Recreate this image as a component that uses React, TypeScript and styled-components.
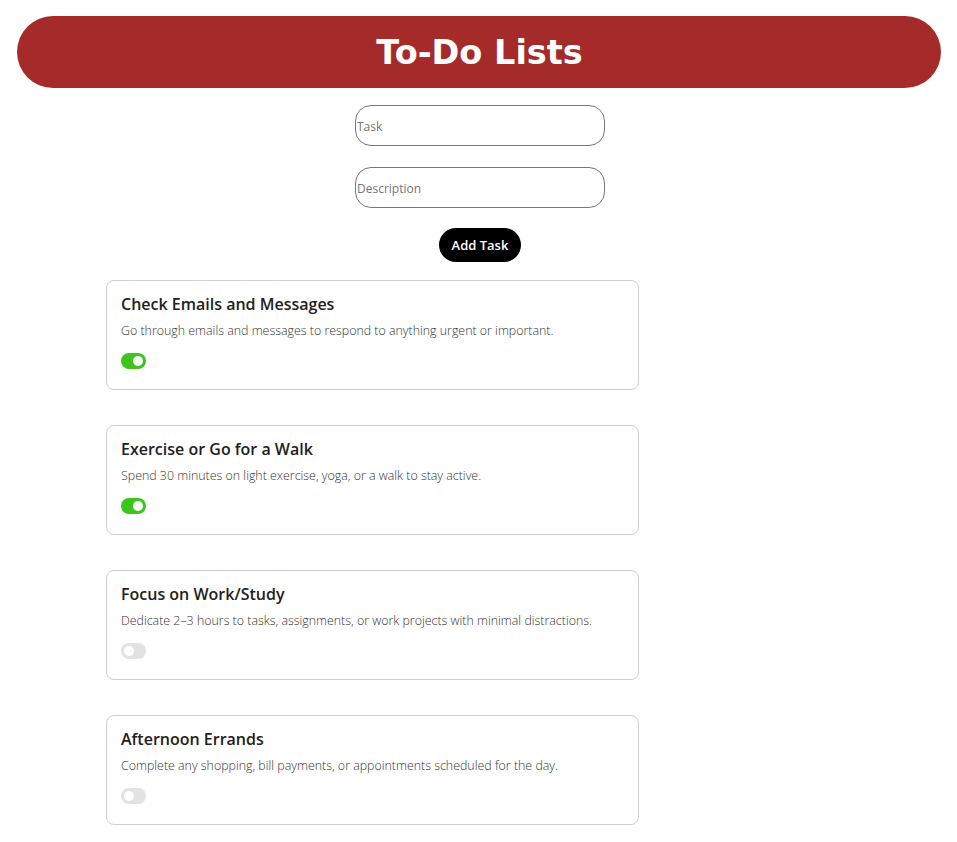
import React, { useState } from "react";
import styled, { createGlobalStyle } from "styled-components";

const Global = createGlobalStyle`
  body {
    margin: 8px;
    background: #ffffff;
    font-family: "Open Sans", "Noto Sans", sans-serif;
  }
  * { box-sizing: border-box; }
`;

const Page = styled.div`
  display: flex;
  flex-direction: column;
`;

const Header = styled.header`
  margin: 8px 8px 0 9px;
  height: 72px;
  background: #a52a2a;
  border-radius: 36px;
  display: flex;
  align-items: center;
  justify-content: center;
`;

const Title = styled.h1`
  margin: 0 0 0 1px;
  color: #ffffff;
  font-family: "DejaVu Sans", Verdana, sans-serif;
  font-weight: bold;
  font-size: 33.5px;
`;

const Form = styled.form`
  display: flex;
  flex-direction: column;
  align-items: center;
  gap: 21px;
  margin-top: 17px;
  margin-left: 3px;
`;

const Input = styled.input`
  width: 250px;
  height: 41px;
  border: 1px solid #767676;
  border-radius: 16px;
  padding: 1px 1px 0;
  font-family: "Open Sans", sans-serif;
  font-size: 12px;
  color: #333;
  outline: none;
  &::placeholder { color: #757575; }
`;

const AddButton = styled.button`
  height: 34px;
  margin-top: -1px;
  padding: 0 13px;
  border: none;
  border-radius: 17px;
  background: #000;
  color: #fff;
  font-family: "Open Sans", sans-serif;
  font-weight: 600;
  font-size: 13px;
  cursor: pointer;
`;

const List = styled.div`
  display: flex;
  flex-direction: column;
  gap: 35px;
  margin: 18px 0 0 98px;
  width: 533px;
`;

const Card = styled.div`
  border: 1px solid #cfcfcf;
  border-radius: 8px;
  padding: 12px 14px 17px 14px;
  height: 110px;
`;

const CardTitle = styled.h2`
  margin: 0;
  font-family: "Open Sans", sans-serif;
  font-weight: 600;
  font-size: 16px;
  line-height: 22px;
  color: #212121;
`;

const CardDesc = styled.p`
  margin: 7px 0 0;
  font-family: "Open Sans", sans-serif;
  font-weight: 300;
  font-size: 12.4px;
  line-height: 17px;
  color: #333;
`;

const Toggle = styled.button<{ $on: boolean }>`
  margin-top: 14px;
  width: 25px;
  height: 16px;
  border: none;
  padding: 0;
  border-radius: 8px;
  background: ${(p) => (p.$on ? "#3ec41c" : "#e2e2e2")};
  position: relative;
  cursor: pointer;
  display: block;
  &::after {
    content: "";
    position: absolute;
    top: 3px;
    left: ${(p) => (p.$on ? "12px" : "3px")};
    width: 10px;
    height: 10px;
    border-radius: 50%;
    background: #fff;
  }
`;

const initial = [
  { title: "Check Emails and Messages", desc: "Go through emails and messages to respond to anything urgent or important.", done: true },
  { title: "Exercise or Go for a Walk", desc: "Spend 30 minutes on light exercise, yoga, or a walk to stay active.", done: true },
  { title: "Focus on Work/Study", desc: "Dedicate 2\u20133 hours to tasks, assignments, or work projects with minimal distractions.", done: false },
  { title: "Afternoon Errands", desc: "Complete any shopping, bill payments, or appointments scheduled for the day.", done: false },
];

export default function App() {
  const [tasks, setTasks] = useState(initial);
  return (
    <Page>
      <Global />
      <Header>
        <Title>To-Do Lists</Title>
      </Header>
      <Form onSubmit={(e) => e.preventDefault()}>
        <Input placeholder="Task" />
        <Input placeholder="Description" />
        <AddButton type="submit">Add Task</AddButton>
      </Form>
      <List>
        {tasks.map((t, i) => (
          <Card key={i}>
            <CardTitle>{t.title}</CardTitle>
            <CardDesc>{t.desc}</CardDesc>
            <Toggle
              $on={t.done}
              onClick={() =>
                setTasks(tasks.map((x, j) => (j === i ? { ...x, done: !x.done } : x)))
              }
            />
          </Card>
        ))}
      </List>
    </Page>
  );
}
